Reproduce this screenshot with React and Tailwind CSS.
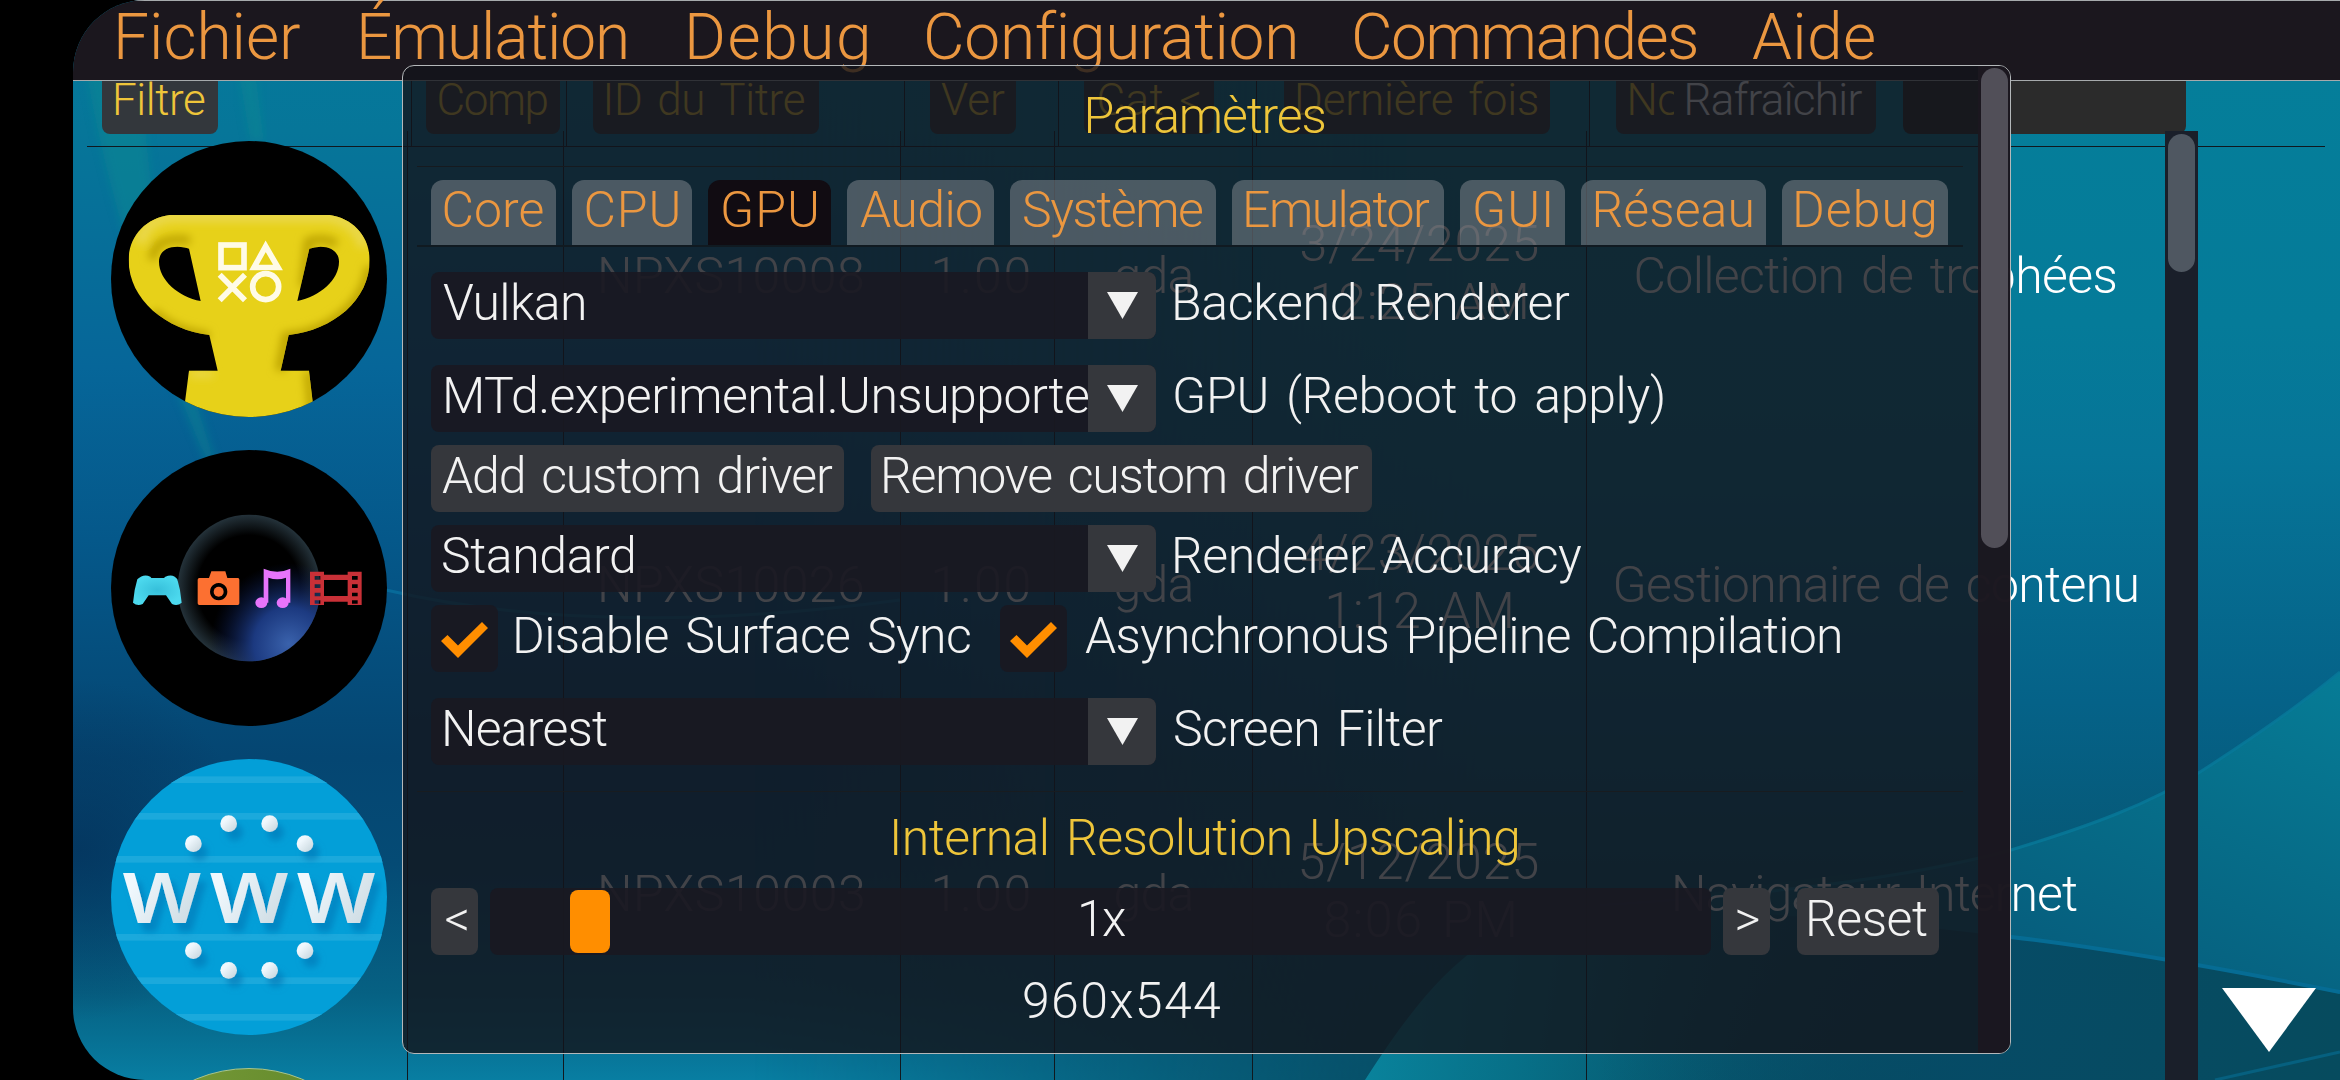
import React, { useLayoutEffect, useState } from "react";
import clsx from "clsx";

/* Text whose ink box is tracked to an exact width, in the thin console face. */
function Label({ children, w, size = 50, className }) {
  const [fit, setFit] = useState({ spacing: 0, shift: 0 });
  useLayoutEffect(() => {
    const ctx = document.createElement("canvas").getContext("2d");
    ctx.font = `350 ${size}px Roboto`;
    const m = ctx.measureText(children);
    const ink = m.actualBoundingBoxRight + m.actualBoundingBoxLeft;
    const spaces = children.split(" ").length - 1;
    const extra = spaces * size * 0.1;
    const gaps = Math.max(children.length - 1, 1);
    setFit({ spacing: (w - ink - extra) / gaps, shift: m.actualBoundingBoxLeft });
  }, [children, w, size]);
  return (
    <span className={clsx("block shrink-0 whitespace-pre", className)} style={{ width: w }}>
      <span
        className={clsx("relative top-px inline-block font-[350] [word-spacing:0.1em]", {
          "text-[64px]": size === 64,
          "text-[50px]": size === 50,
          "text-[44px]": size === 44,
        })}
        style={{ letterSpacing: fit.spacing, marginLeft: fit.shift }}
      >
        {children}
      </span>
    </span>
  );
}

function Wallpaper() {
  return (
    <svg className="absolute inset-0 h-full w-full" viewBox="73 0 2267 1080" preserveAspectRatio="none">
      <defs>
        <linearGradient id="base" x1="0" y1="0" x2="0" y2="1">
          <stop offset="0" stopColor="#057a9c" />
          <stop offset="0.12" stopColor="#067699" />
          <stop offset="0.34" stopColor="#066699" />
          <stop offset="0.5" stopColor="#05588a" />
          <stop offset="0.7" stopColor="#054672" />
          <stop offset="0.8" stopColor="#054b75" />
          <stop offset="0.92" stopColor="#066183" />
          <stop offset="1" stopColor="#087ea2" />
        </linearGradient>
        <linearGradient id="right" x1="0" y1="0" x2="0" y2="1">
          <stop offset="0" stopColor="#057f9a" />
          <stop offset="0.3" stopColor="#057b99" />
          <stop offset="0.42" stopColor="#067598" />
          <stop offset="0.65" stopColor="#056288" />
          <stop offset="0.8" stopColor="#065876" />
          <stop offset="1" stopColor="#06485f" />
        </linearGradient>
        <linearGradient id="fade" x1="0" y1="0" x2="1" y2="0">
          <stop offset="0.3" stopColor="#fff" stopOpacity="0" />
          <stop offset="0.62" stopColor="#fff" />
        </linearGradient>
        <mask id="rightMask"><rect x="73" width="2267" height="1080" fill="url(#fade)" /></mask>
        <linearGradient id="swell" x1="0" y1="1" x2="1" y2="0">
          <stop offset="0" stopColor="#06607f" stopOpacity="0" />
          <stop offset="0.4" stopColor="#06607f" />
          <stop offset="0.65" stopColor="#066c88" />
          <stop offset="1" stopColor="#067c96" />
        </linearGradient>
        <linearGradient id="floor" x1="0" y1="0" x2="1" y2="0">
          <stop offset="0" stopColor="#064b66" stopOpacity="0" />
          <stop offset="0.5" stopColor="#064b66" stopOpacity="0.9" />
          <stop offset="1" stopColor="#064b5e" />
        </linearGradient>
        <linearGradient id="petal" x1="0" y1="0" x2="1" y2="0">
          <stop offset="0" stopColor="#0a8fa8" />
          <stop offset="0.25" stopColor="#077890" />
          <stop offset="1" stopColor="#065066" stopOpacity="0" />
        </linearGradient>
        <radialGradient id="deep">
          <stop offset="0" stopColor="#04335c" stopOpacity="0.8" />
          <stop offset="1" stopColor="#04335c" stopOpacity="0" />
        </radialGradient>
        <filter id="soft"><feGaussianBlur stdDeviation="5" /></filter>
      </defs>
      <rect x="73" width="2267" height="1080" fill="url(#base)" />
      <rect x="73" width="2267" height="1080" fill="url(#right)" mask="url(#rightMask)" />
      <ellipse cx="80" cy="850" rx="170" ry="170" fill="url(#deep)" />
      <path d="M84 60 L140 60 C150 210 170 330 218 470 L206 460 C150 330 105 190 84 60Z" fill="#078a92" opacity="0.5" filter="url(#soft)" />
      <path d="M236 60 L254 60 L264 140 L250 140Z" fill="#078a92" opacity="0.5" filter="url(#soft)" />
      <path d="M386 590 Q600 640 900 600" stroke="#0a7fae" strokeWidth="3" fill="none" opacity="0.5" />
      <path d="M1365 1080 C1410 1010 1440 975 1480 945 C1700 880 1850 880 2011 850 L2011 1080Z" fill="url(#petal)" opacity="0.8" />
      <path d="M1600 905 C1760 895 1900 880 2011 850 C2090 826 2150 804 2200 772 C2250 740 2300 705 2340 672 V994 C2240 972 2120 950 2011 937 C1880 922 1760 912 1600 905Z" fill="url(#swell)" />
      <path d="M1600 905 C1760 895 1900 880 2011 850 C2090 826 2150 804 2200 772 C2250 740 2300 705 2340 672" stroke="#07799a" strokeWidth="3" fill="none" opacity="0.8" />
      <path d="M1600 905 C1760 912 1880 922 2011 937 C2120 950 2240 972 2340 994 V1080 H1600Z" fill="url(#floor)" />
      <path d="M2011 937 C2120 950 2240 972 2340 992" stroke="#066c94" strokeWidth="4" fill="none" />
      <path d="M2215 1080 L2340 1052" stroke="#06607f" strokeWidth="3" fill="none" />
    </svg>
  );
}

function TrophyIcon() {
  return (
    <svg className="size-[276px]" viewBox="63 63 828 828">
      <defs>
        <clipPath id="disc"><circle cx="477" cy="477" r="414" /></clipPath>
        <clipPath id="cup">
          <path
            clipRule="evenodd"
            d="M240 285 H718 C790 295 839 350 839 420 C839 540 730 630 596 645 L572 752 H657 L668 845 V900 H285 V845 L297 752 H383 L358 645 C230 630 116 540 116 420 C116 350 165 295 240 285Z M297 386 L332 543 C265 530 207 480 207 425 C207 395 230 380 262 380 Q285 381 297 386Z M658 386 L622 543 C690 528 747 480 747 425 C747 395 722 380 692 380 Q672 381 658 386Z"
          />
        </clipPath>
        <filter id="glow" x="-30%" y="-30%" width="160%" height="160%"><feGaussianBlur stdDeviation="12" /></filter>
      </defs>
      <g clipPath="url(#disc)">
        <rect width="960" height="960" fill="#000" />
        <g clipPath="url(#cup)">
          <rect width="960" height="960" fill="#e7d119" />
          <g filter="url(#glow)" fill="none">
            <path d="M150 370 C165 310 210 290 260 290 H720 C770 300 810 330 822 380" stroke="#ead84c" strokeWidth="34" />
            <path d="M188 420 C188 370 230 350 300 362" stroke="#bda400" strokeWidth="26" />
            <path d="M640 500 L655 365 Q700 350 740 372" stroke="#bda400" strokeWidth="26" />
            <path d="M839 440 C825 560 710 640 590 650 L570 752" stroke="#bda400" strokeWidth="30" />
            <path d="M190 575 C240 625 300 640 358 648" stroke="#bda400" strokeWidth="26" />
            <path d="M655 755 L668 900" stroke="#bda400" strokeWidth="26" />
            <path d="M300 762 H370" stroke="#ead84c" strokeWidth="20" />
          </g>
        </g>
        <g fill="none" stroke="#fffbe6" strokeWidth="17">
          <rect x="393" y="375" width="69" height="68" />
          <path d="M527 379 L492 442.500 H564Z" />
          <path d="M389 464 L465 541 M465 464 L389 541" />
          <circle cx="527" cy="500" r="39" />
        </g>
      </g>
    </svg>
  );
}

function ContentIcon() {
  return (
    <svg className="size-[276px]" viewBox="63 60 828 828">
      <defs>
        <radialGradient id="lens" cx="0.5" cy="0.5" r="0.5">
          <stop offset="0.72" stopColor="#000" />
          <stop offset="1" stopColor="#24323a" />
        </radialGradient>
        <radialGradient id="lensBlue" cx="0.78" cy="0.88" r="0.55">
          <stop offset="0" stopColor="#3a62ac" />
          <stop offset="0.45" stopColor="#1d3c86" stopOpacity="0.95" />
          <stop offset="1" stopColor="#0a1a50" stopOpacity="0" />
        </radialGradient>
        <radialGradient id="pad"><stop offset="0" stopColor="#36bfda" /><stop offset="1" stopColor="#4cd9ee" /></radialGradient>
      </defs>
      <circle cx="477" cy="474" r="414" fill="#000" />
      <ellipse cx="477" cy="474" rx="214" ry="220" fill="url(#lens)" />
      <ellipse cx="477" cy="474" rx="214" ry="220" fill="url(#lensBlue)" />
      <path fill="url(#pad)" d="M142 448 Q160 430 181 440 L184 444 H222 L226 440 Q250 430 262 448 Q272 480 275 518 Q262 530 246 522 L228 496 H176 L158 522 Q142 530 129 518 Q132 480 142 448Z" />
      <path fill="#fc7031" fillRule="evenodd" d="M328 444 H357 L364 424 H406 L412 444 H444 Q448 444 448 449 V520 Q448 525 443 525 H328 Q323 525 323 520 V449 Q323 444 328 444Z M386 459 a26 26 0 1 0 .1 0Z" />
      <circle cx="386" cy="485" r="15" fill="#fc7031" />
      <g fill="#e774fb">
        <ellipse cx="514" cy="518" rx="18" ry="16" />
        <ellipse cx="578" cy="518" rx="18" ry="16" />
        <path d="M521 416 Q562 434 601 416 V518 H588 V443 Q562 452 535 443 V518 H521Z" />
      </g>
      <path fill="#c93037" fillRule="evenodd" d="M660 425 H702 V434 H773 V425 H815 V525 H773 V515 H702 V525 H660Z M702 450 V498 H773 V450Z M674 438 V449 H691 V438Z M674 463 V474 H691 V463Z M674 488 V499 H691 V488Z M674 511 V521 H691 V511Z M786 438 V449 H803 V438Z M786 463 V474 H803 V463Z M786 488 V499 H803 V488Z M786 511 V521 H803 V511Z" />
    </svg>
  );
}

const webDots = [[416, 251], [539, 251], [310, 311], [645, 311], [310, 632], [645, 632], [416, 691], [539, 691]];

function BrowserIcon() {
  return (
    <svg className="size-[276px]" viewBox="63 57 828 828">
      <defs>
        <clipPath id="globe"><circle cx="477" cy="471" r="414" /></clipPath>
        <linearGradient id="pearl" x1="0" y1="0" x2="1" y2="1">
          <stop offset="0.3" stopColor="#f0f8fd" />
          <stop offset="1" stopColor="#c3d3db" />
        </linearGradient>
        <filter id="drop" x="-20%" y="-20%" width="140%" height="150%">
          <feDropShadow dx="18" dy="26" stdDeviation="10" floodColor="#0070b0" floodOpacity="0.55" />
        </filter>
      </defs>
      <g clipPath="url(#globe)">
        <rect width="960" height="960" fill="#039fd8" />
        {[109, 219, 348, 582, 712, 822].map((y) => (
          <rect key={y} x="60" y={y} width="840" height="20" fill="#1ba9dc" />
        ))}
        <g filter="url(#drop)" fill="url(#pearl)">
          {webDots.map(([x, y]) => (
            <circle key={`${x}-${y}`} cx={x} cy={y} r="25" />
          ))}
          {[96, 358, 619].map((x) => (
            <text key={x} x={x} y="550" textLength="239" lengthAdjust="spacingAndGlyphs" className="font-['Open_Sans'] text-[278px] font-semibold">
              w
            </text>
          ))}
        </g>
      </g>
    </svg>
  );
}

const menus = [
  ["Fichier", 182, "ml-[45px]"],
  ["Émulation", 265, "ml-[61px]"],
  ["Debug", 178, "ml-[63px]"],
  ["Configuration", 367, "ml-[60px]"],
  ["Commandes", 341, "ml-[61px]"],
  ["Aide", 122, "ml-[56px]"],
];

const titles = [
  { Icon: TrophyIcon, id: "NPXS10008", date: ["3/24/2025", "12:25 AM", 212], name: "Collection de trophées", w: 479 },
  { Icon: ContentIcon, id: "NPXS10026", date: ["4/23/2025", "1:12 AM", 182], name: "Gestionnaire de contenu", w: 521 },
  { Icon: BrowserIcon, id: "NPXS10003", date: ["5/12/2025", "8:06 PM", 188], name: "Navigateur Internet", w: 402 },
];

const tabs = [
  ["Core", 98, "w-[125px]"],
  ["CPU", 91, "w-[120px]"],
  ["GPU", 93, "w-[123px]"],
  ["Audio", 121, "w-[147px]"],
  ["Système", 178, "w-[206px]"],
  ["Emulator", 184, "w-[212px]"],
  ["GUI", 75, "w-[105px]"],
  ["Réseau", 156, "w-[185px]"],
  ["Debug", 138, "w-[166px]"],
];

function HeadButton({ className, children }) {
  return (
    <div className={clsx("flex h-[53px] items-center justify-center rounded-b-lg bg-[#33373c] pb-[18px] text-[#eec53a]", className)}>
      {children}
    </div>
  );
}

function Cell({ className, children }) {
  return (
    <div className={clsx("border-l border-[#10181e]", className)}>
      <div className="flex h-[288px] flex-col items-center justify-center">{children}</div>
    </div>
  );
}

function Library() {
  return (
    <div className="relative flex flex-1 flex-col overflow-hidden">
      <div className="ml-[14px] mr-[15px] flex h-[66px] shrink-0 border-b border-[#10181e]">
        <div className="w-[324px] pl-[15px]"><HeadButton className="w-[116px]"><Label w={90} size={44}>Filtre</Label></HeadButton></div>
        <div className="w-[155px] border-l border-[#10181e] pl-[14px]"><HeadButton className="w-[134px]"><Label w={109} size={44}>Comp</Label></HeadButton></div>
        <div className="w-[338px] border-l border-[#10181e] pl-[26px]"><HeadButton className="w-[226px]"><Label w={199} size={44}>ID du Titre</Label></HeadButton></div>
        <div className="w-[154px] border-l border-[#10181e] pl-[25px]"><HeadButton className="w-[86px]"><Label w={64} size={44}>Ver</Label></HeadButton></div>
        <div className="w-[198px] border-l border-[#10181e] pl-[25px]"><HeadButton className="w-[130px]"><Label w={101} size={44}>{"Cat <"}</Label></HeadButton></div>
        <div className="w-[333px] border-l border-[#10181e] pl-[27px]"><HeadButton className="w-[266px]"><Label w={240} size={44}>Dernière fois</Label></HeadButton></div>
        <div className="flex flex-1 border-l border-[#10181e] pl-[26px]">
          <HeadButton className="w-[260px]">
            <div className="w-[44px] overflow-hidden"><Label w={88} size={44}>Nom</Label></div>
            <Label w={176} size={44} className="ml-[13px] text-white">Rafraîchir</Label>
          </HeadButton>
          <div className="ml-[27px] h-[53px] w-[283px] rounded-b-lg bg-[#2b2b2b]" />
        </div>
      </div>
      <div className="relative -mt-[16px] flex flex-1">
        <div className="w-[2092px]">
          {titles.map(({ Icon, id, date, name, w }) => (
            <div key={id} className="flex h-[309px] text-white">
              <div className="w-[334px] pl-[38px] pt-[10px]"><Icon /></div>
              <Cell className="w-[156px]" />
              <Cell className="w-[337px]"><Label w={262}>{id}</Label></Cell>
              <Cell className="w-[154px]"><Label w={94} className="ml-[8px]">1.00</Label></Cell>
              <Cell className="w-[198px]"><Label w={76}>gda</Label></Cell>
              <Cell className="w-[334px]">
                <Label w={236} className="h-[58px] leading-[52px]">{date[0]}</Label>
                <Label w={date[2]} className="h-[58px] leading-[52px]">{date[1]}</Label>
              </Cell>
              <Cell className="w-[579px]"><Label w={w}>{name}</Label></Cell>
            </div>
          ))}
          <div className="flex h-[30px] overflow-hidden">
            <div className="w-[334px] pl-[38px] pt-[10px]">
              <div className="size-[276px] rounded-full border border-[#a9c48a] bg-linear-to-r from-[#7d9f3c] to-[#5c8427]" />
            </div>
            <Cell className="w-[156px]" />
            <Cell className="w-[337px]" />
            <Cell className="w-[154px]" />
            <Cell className="w-[198px]" />
            <Cell className="w-[334px]" />
            <Cell className="w-[579px]" />
          </div>
        </div>
        <div className="w-[33px] bg-[#1a1f2a] px-[3px] pt-[3px]"><div className="h-[138px] rounded-full bg-[#4f5761]" /></div>
        <svg className="ml-[24px] mt-[857px] h-[64px] w-[94px]" viewBox="0 0 94 64"><path d="M0 0 H94 L47 64Z" fill="#fff" /></svg>
      </div>
    </div>
  );
}

function Combo({ value, vw, label, lw, inset = "pl-[12px]" }) {
  return (
    <div className="flex h-[67px] shrink-0">
      <div className="flex w-[725px] overflow-hidden rounded-lg bg-[#1a1821]/90">
        <div className={clsx("flex w-[657px] items-center overflow-hidden pb-[6px]", inset)}><Label w={vw}>{value}</Label></div>
        <div className="flex w-[68px] justify-center bg-[#35373c] pt-[20px]">
          <svg className="h-[27px] w-[31px]" viewBox="0 0 31 27"><path d="M0 0 H31 L15.500 27Z" fill="#f2f2f2" /></svg>
        </div>
      </div>
      <div className="flex items-center pb-[6px] pl-[19px]"><Label w={lw}>{label}</Label></div>
    </div>
  );
}

function Check({ label, w, className }) {
  return (
    <div className={clsx("flex h-[67px]", className)}>
      <div className="size-[67px] rounded-lg bg-[#1a1821]/90 pl-[10px] pt-[17px]">
        <svg className="h-[36px] w-[47px]" viewBox="0 0 47 36"><path d="M0 19 L6.500 13 L17 23.500 L41 0 L47 6 L17 36Z" fill="#ff8e00" /></svg>
      </div>
      <div className="flex items-center pb-[6px] pl-[18px]"><Label w={w}>{label}</Label></div>
    </div>
  );
}

function Button({ className, children }) {
  return <div className={clsx("flex h-[67px] items-center justify-center rounded-lg bg-[#35373c] pb-[6px]", className)}>{children}</div>;
}

function Settings() {
  return (
    <div className="absolute left-[329px] top-[65px] flex h-[989px] w-[1609px] overflow-hidden rounded-xl border border-[#b4b8ba] bg-[#13141a]/80 text-[#f2f2f2]">
      <div className="flex w-[1575px] flex-col pl-[14px] pr-[15px]">
        <div className="mt-[19px] flex h-[60px] shrink-0 items-center justify-center pl-[32px] text-[#eec53a]"><Label w={237}>Paramètres</Label></div>
        <div className="mt-[21px] h-px shrink-0 bg-[#161a1f]" />
        <div className="mt-[13px] flex h-[67px] shrink-0 gap-4 border-b-2 border-[#101a21] pl-[14px] text-[#eb9740]">
          {tabs.map(([name, w, width]) => (
            <div key={name} className={clsx("flex items-center justify-center rounded-t-xl pb-[6px]", width, name === "GPU" ? "bg-[#110c12]" : "bg-[#868c92]/50")}>
              <Label w={w}>{name}</Label>
            </div>
          ))}
        </div>
        <div className="mt-[25px] flex flex-col pl-[14px]">
          <Combo value="Vulkan" vw={141} label="Backend Renderer" lw={395} />
          <div className="h-[26px]" />
          <Combo value="MTd.experimental.Unsupporte" vw={642} label="GPU (Reboot to apply)" lw={488} inset="pl-[15px]" />
          <div className="my-[13px] flex gap-[27px]">
            <Button className="w-[413px]"><Label w={391}>Add custom driver</Label></Button>
            <Button className="w-[501px]"><Label w={475}>Remove custom driver</Label></Button>
          </div>
          <Combo value="Standard" vw={190} label="Renderer Accuracy" lw={407} />
          <div className="mb-[26px] mt-[13px] flex">
            <Check label="Disable Surface Sync" w={454} />
            <Check label="Asynchronous Pipeline Compilation" w={755} className="ml-[30px]" />
          </div>
          <Combo value="Nearest" vw={162} label="Screen Filter" lw={268} inset="pl-[14px]" />
        </div>
        <div className="mt-[26px] h-px shrink-0 bg-[#181c20]" />
        <div className="mt-[15px] flex h-[60px] shrink-0 items-center justify-center pl-[31px] text-[#eec53a]"><Label w={623}>Internal Resolution Upscaling</Label></div>
        <div className="mt-[21px] flex pl-[14px]">
          <Button className="w-[47px] pl-[3px]"><Label w={21}>{"<"}</Label></Button>
          <div className="ml-[12px] flex h-[67px] w-[1221px] rounded-lg bg-[#1a1821]/90">
            <div className="ml-[80px] mt-[2px] h-[63px] w-[40px] rounded-lg bg-[#ff8e00]" />
            <div className="ml-[471px] flex items-center pb-[6px]"><Label w={45}>1x</Label></div>
          </div>
          <Button className="ml-[12px] w-[47px] pl-[3px]"><Label w={21}>{">"}</Label></Button>
          <Button className="ml-[27px] w-[142px]"><Label w={118}>Reset</Label></Button>
        </div>
        <div className="mt-[15px] flex h-[60px] shrink-0 items-center pl-[607px]"><Label w={196}>960x544</Label></div>
      </div>
      <div className="w-[32px] bg-[#1b1720]/95 pl-[3px] pt-[2px]"><div className="h-[480px] w-[27px] rounded-full bg-[#514f58]" /></div>
    </div>
  );
}

export default function App() {
  return (
    <div className="h-[1080px] w-[2340px] overflow-hidden bg-black pl-[73px] font-[Roboto,'Liberation_Sans',sans-serif]">
      <div className="relative flex h-full flex-col overflow-hidden rounded-l-[72px]">
        <Wallpaper />
        <div className="relative flex h-[81px] shrink-0 items-center border-b border-t border-[#a6aaac] bg-[#1b171e] pb-[7px] text-[#eb9740]">
          {menus.map(([name, w, gap]) => (
            <Label key={name} w={w} size={64} className={gap}>{name}</Label>
          ))}
        </div>
        <Library />
        <Settings />
      </div>
    </div>
  );
}
